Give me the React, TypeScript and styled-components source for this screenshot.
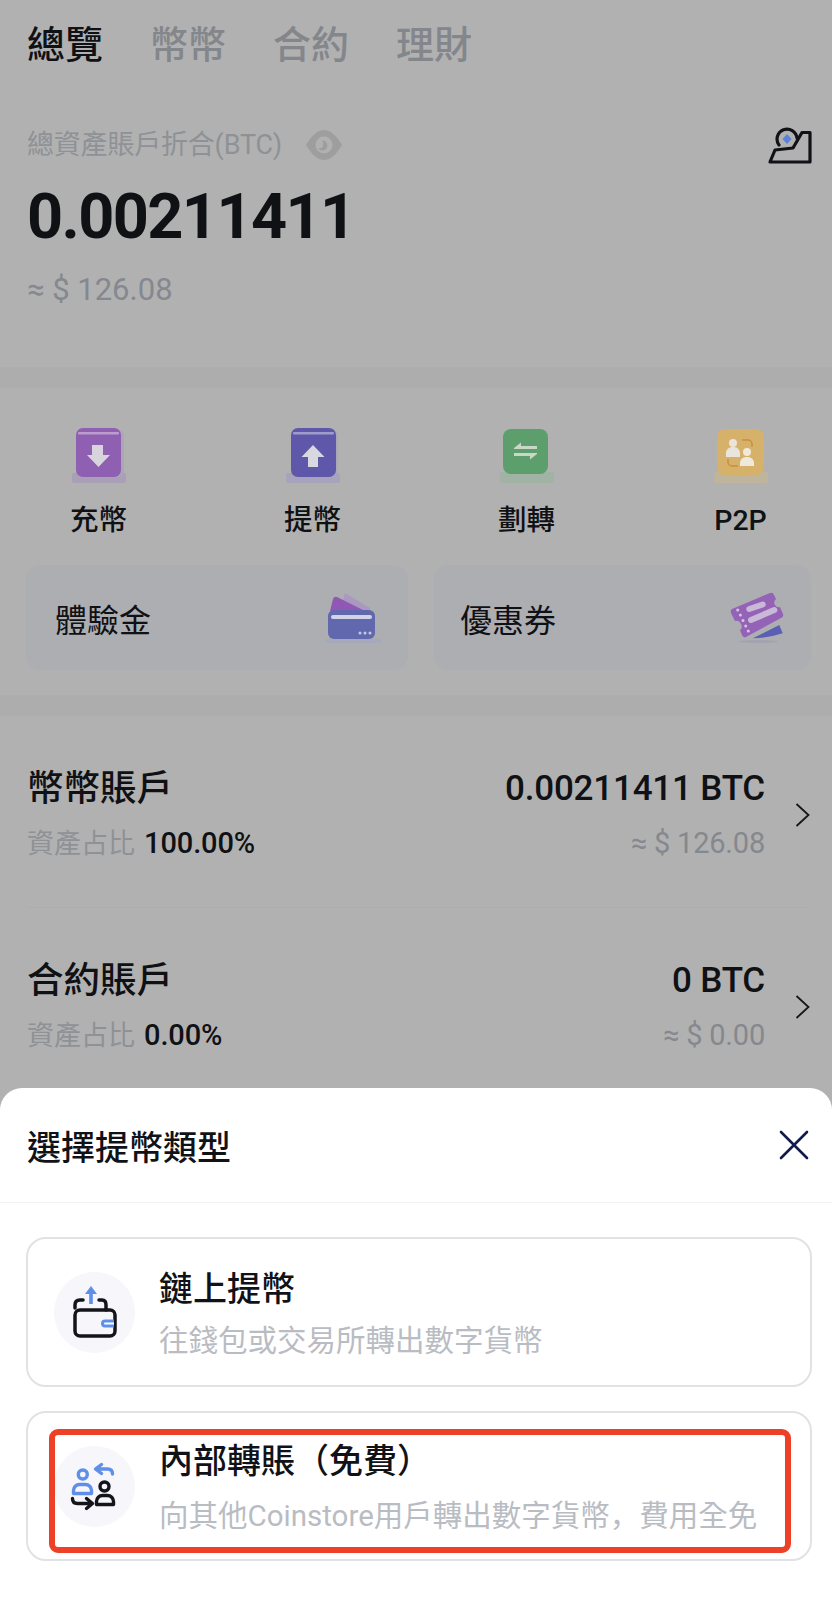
import styled, { createGlobalStyle } from 'styled-components'

const GlobalStyle = createGlobalStyle`
  html, body {
    margin: 0;
    padding: 0;
    background: #b1b1b1;
    font-family: Roboto, "Noto Sans CJK TC", sans-serif;
  }
  * { box-sizing: border-box; }
`

const Page = styled.div`
  position: relative;
  width: 832px;
  height: 1610px;
  overflow: hidden;
  background: #b1b1b1;
  color: #101114;
`

const TopSection = styled.section`
  height: 367px;
  padding: 22px 20px 0 27px;
`

const TabBar = styled.div`
  display: flex;
  gap: 47px;
`

const Tab = styled.div<{ $active?: boolean }>`
  font-size: 38px;
  line-height: 46px;
  font-weight: 500;
  color: ${p => (p.$active ? '#101114' : '#83868b')};
`

const BalanceHead = styled.div`
  display: flex;
  align-items: center;
  gap: 24px;
  height: 44px;
  margin-top: 55px;
`

const BalanceLabel = styled.span`
  font-size: 27px;
  line-height: 30px;
  color: #8e9196;
  letter-spacing: -0.2px;
`

const HeadAction = styled.svg`
  margin-left: auto;
  margin-top: 4px;
`

const BalanceValue = styled.div`
  margin-top: 15px;
  font-size: 63px;
  line-height: 70px;
  font-weight: 700;
  letter-spacing: -1.6px;
`

const BalanceFiat = styled.div`
  margin-top: 20px;
  font-size: 31px;
  line-height: 36px;
  color: #85888e;
`

const Band = styled.div<{ $height: number }>`
  height: ${p => p.$height}px;
  background: #adadad;
`

const ActionSection = styled.section`
  height: 307px;
  padding-top: 40px;
`

const ActionRow = styled.div`
  display: flex;
  justify-content: space-between;
  padding: 0 63px 0 70px;
`

const Action = styled.div`
  display: flex;
  flex-direction: column;
  align-items: center;
  gap: 19px;
  width: 57px;
`

const ActionLabel = styled.span`
  font-size: 28.5px;
  line-height: 36px;
  font-weight: 500;
  white-space: nowrap;
`

const PromoRow = styled.div`
  display: grid;
  grid-template-columns: 382px 377px;
  gap: 26px;
  margin: 26px 0 0 26px;
`

const PromoCard = styled.div<{ $inset: number }>`
  display: flex;
  align-items: center;
  justify-content: space-between;
  height: 105px;
  padding: 0 27px 0 ${p => p.$inset}px;
  border-radius: 14px;
  background: #adaeb1;
`

const PromoLabel = styled.span`
  font-size: 32px;
  line-height: 40px;
  margin-top: 6px;
`

const AccountList = styled.section`
  padding: 0 22px 0 27px;
`

const AccountRow = styled.div`
  display: flex;
  align-items: center;
  padding: 53px 0 46px;
  border-bottom: 1px solid #adadad;
`

const AccountMain = styled.div`
  flex: 1;
`

const AccountLine = styled.div`
  display: flex;
  justify-content: space-between;
`

const SubLine = styled(AccountLine)`
  margin-top: 17px;
`

const AccountName = styled.span`
  font-size: 36.5px;
  line-height: 40px;
  font-weight: 500;
`

const AccountAmount = styled.span`
  font-size: 35px;
  line-height: 40px;
  font-weight: 500;
  letter-spacing: -0.2px;
`

const Share = styled.span`
  font-size: 27px;
  line-height: 34px;
  color: #8e9196;
  b {
    margin-left: 9px;
    font-size: 29px;
    font-weight: 500;
    letter-spacing: -0.1px;
    color: #101114;
  }
`

const AccountFiat = styled.span`
  font-size: 29px;
  line-height: 34px;
  color: #85888e;
  letter-spacing: -0.2px;
`

const Chevron = styled.svg`
  margin-left: 30px;
  flex: none;
`

const Sheet = styled.div`
  position: absolute;
  left: 0;
  right: 0;
  bottom: 0;
  height: 522px;
  border-radius: 22px 22px 0 0;
  background: #fff;
`

const SheetHeader = styled.header`
  display: flex;
  align-items: center;
  justify-content: space-between;
  height: 115px;
  padding: 0 23px 0 27px;
  border-bottom: 1px solid #f1f2f4;
`

const SheetTitle = styled.h2`
  margin: 6px 0 0;
  font-size: 34px;
  line-height: 42px;
  font-weight: 500;
  color: #111217;
`

const SheetBody = styled.div`
  display: flex;
  flex-direction: column;
  gap: 24px;
  padding: 34px 20px 0 26px;
`

const OptionCard = styled.div`
  position: relative;
  display: flex;
  align-items: center;
  gap: 24px;
  height: 150px;
  padding-left: 26px;
  border: 2px solid #e1e2e5;
  border-radius: 20px;
`

const OptionIcon = styled.div`
  flex: none;
  width: 81px;
  height: 81px;
  border-radius: 50%;
  background: #f6f6fb;
  svg { display: block; }
`

const OptionText = styled.div`
  display: flex;
  flex-direction: column;
  gap: 16px;
  padding-top: 5px;
`

const OptionTitle = styled.div`
  font-size: 34px;
  line-height: 36px;
  font-weight: 500;
  color: #111217;
`

const OptionHint = styled.div`
  font-size: 29.5px;
  line-height: 36px;
  color: #b9bcc2;
  white-space: nowrap;
`

const HintComma = styled.span`
  font-family: "Noto Sans CJK SC", sans-serif;
`

const Highlight = styled.div`
  position: absolute;
  left: 21px;
  top: 16px;
  width: 742px;
  height: 124px;
  border: 6px solid #ee4026;
  border-radius: 9px;
`

const ArrowDownIcon = () => (
  <svg width="54" height="56" viewBox="0 0 54 56">
    <rect x="0" y="45" width="54" height="10" rx="2" fill="#a9a0b8" />
    <rect x="6" y="1" width="46" height="48" rx="7" fill="#aaa6b6" />
    <rect x="4" y="0" width="45" height="49" rx="7" fill="#8f5fb2" />
    <rect x="6" y="4" width="41" height="2.5" rx="1" fill="#bb9ccf" />
    <path d="M20 17h11v10h7L26.5 39 15 27h5z" fill="#d8d4de" />
  </svg>
)

const ArrowUpIcon = () => (
  <svg width="54" height="56" viewBox="0 0 54 56">
    <rect x="0" y="45" width="54" height="10" rx="2" fill="#a6a3ba" />
    <rect x="7" y="1" width="45" height="48" rx="7" fill="#a9a8b8" />
    <rect x="5" y="0" width="45" height="49" rx="7" fill="#5f58aa" />
    <rect x="7" y="4" width="41" height="2.5" rx="1" fill="#9f9bca" />
    <path d="M27 17l11.500 12H32v10H22V29h-6.500z" fill="#d8d8e0" />
  </svg>
)

const ExchangeIcon = () => (
  <svg width="54" height="56" viewBox="0 0 54 56">
    <rect x="0" y="44" width="54" height="11" rx="2" fill="#a1b3a5" />
    <rect x="3" y="1" width="45" height="45" rx="8" fill="#5d9f6c" />
    <path d="M14 20l7-5.500V18h16v3H14zM37 26l-7 5.500V28H14v-3h23z" fill="#c9d6c8" />
  </svg>
)

const PeopleIcon = () => (
  <svg width="54" height="56" viewBox="0 0 54 56">
    <rect x="0" y="44" width="54" height="11" rx="2" fill="#bfb59d" />
    <rect x="3" y="1" width="47" height="46" rx="8" fill="#d6b169" />
    <path d="M28 12h6a4 4 0 0 1 4 4v3M14 31v3a4 4 0 0 0 4 4h6" fill="none" stroke="#c98f3f" strokeWidth="1.500" />
    <circle cx="19" cy="15" r="4" fill="#e9e5dc" />
    <path d="M12 29v-4a6 6 0 0 1 6-6h2a6 6 0 0 1 6 6v4z" fill="#e9e5dc" />
    <circle cx="33" cy="24" r="4" fill="#efe9dc" />
    <path d="M26 38v-3a6 6 0 0 1 6-6h2a6 6 0 0 1 6 6v3z" fill="#efe9dc" />
  </svg>
)

const WalletCardIcon = () => (
  <svg width="56" height="51" viewBox="0 0 56 51">
    <rect x="0" y="47" width="56" height="4" rx="1" fill="#a6a8bc" />
    <path d="M20 1l25 15v6H14z" fill="#a999c0" />
    <path d="M8 7q1-3 4-2l28 14H5z" fill="#9157b5" />
    <rect x="3" y="18" width="47" height="29" rx="6" fill="#6268ae" />
    <rect x="6" y="23" width="41" height="4" rx="2" fill="#d2d3e6" />
    <circle cx="35" cy="41" r="1.500" fill="#c7c9e0" />
    <circle cx="40" cy="41" r="1.500" fill="#c7c9e0" />
    <circle cx="45" cy="41" r="1.500" fill="#c7c9e0" />
  </svg>
)

const CouponIcon = () => (
  <svg width="54" height="52" viewBox="0 0 54 52">
    <ellipse cx="28" cy="49.500" rx="20" ry="1.500" fill="#a2a2b0" />
    <path d="M22.700 46.300L49.300 33l3.400 8.300q-14 4.700-30 5z" fill="#5b5eb5" />
    <path d="M2 17L40 1q3-1 4 2l2 4q-3 3-1 6t5 2l3 7q1 3-2 4L16 45q-3 1-4-2l-2-5q3-2 1-6t-6-3l-4-8q-1-3 1-4z" fill="#9463b8" />
    <path d="M19.300 17L32.700 12.500M21 28L44.300 18" stroke="#c9b8d6" strokeWidth="6" strokeLinecap="round" />
    <g fill="#d4c6de">
      <circle cx="7.700" cy="18" r="1.500" />
      <circle cx="10.400" cy="23" r="1.500" />
      <circle cx="13" cy="28.500" r="1.500" />
      <circle cx="15.700" cy="34" r="1.500" />
      <circle cx="18.300" cy="39" r="1.500" />
    </g>
  </svg>
)

const EyeIcon = () => (
  <svg width="36" height="30" viewBox="0 0 36 30">
    <path d="M0 15C6 5 12 0 18 0s12 5 18 15c-6 10-12 15-18 15S6 25 0 15z" fill="#9e9e9e" />
    <circle cx="18" cy="15" r="8.500" fill="#b1b1b1" />
    <path d="M16 10.500a5 5 0 1 1-4 7.500q4 1 5-2t-1-5.500z" fill="#9e9e9e" />
  </svg>
)

const ChainWalletIcon = () => (
  <svg width="81" height="81" viewBox="-6 -8 81 81">
    <path d="M15 28v-3q0-5 5-5h3M39 20h3q4 0 4 5v5" fill="none" stroke="#14151a" strokeWidth="3.500" strokeLinecap="round" />
    <rect x="15" y="30" width="40" height="26" rx="5" fill="none" stroke="#14151a" strokeWidth="3.500" />
    <path d="M54 41h-9a2.500 2.500 0 0 0 0 5h9" fill="#fff" stroke="#5f8fe8" strokeWidth="3" />
    <path d="M31 24V12" stroke="#5f8fe8" strokeWidth="3.600" />
    <path d="M31 6l6 8H25z" fill="#5f8fe8" />
  </svg>
)

const TransferIcon = () => (
  <svg width="81" height="81" viewBox="-5.500 -4.500 81 81" fill="none" strokeLinecap="round" strokeLinejoin="round">
    <circle cx="23.300" cy="24" r="4.500" stroke="#5f8fe8" strokeWidth="3.400" />
    <path d="M14 43v-3a6 6 0 0 1 6-6h6a6 6 0 0 1 6 6v3z" stroke="#5f8fe8" strokeWidth="3.400" />
    <path d="M42 14l-6 4.500 6 4.500M37 18.500h11q5 0 5 5" stroke="#5f8fe8" strokeWidth="3.400" />
    <circle cx="45" cy="36" r="4.500" stroke="#14151a" strokeWidth="3.400" />
    <path d="M37 54v-3a6 6 0 0 1 6-6h5a6 6 0 0 1 6 6v3z" stroke="#14151a" strokeWidth="3.400" />
    <path d="M13 48q0 5 5 5h14M27 48l6 5-6 5" stroke="#14151a" strokeWidth="3.400" />
  </svg>
)

const accounts = [
  { name: '幣幣賬戶', share: '100.00%', amount: '0.00211411 BTC', fiat: '≈ $ 126.08' },
  { name: '合約賬戶', share: '0.00%', amount: '0 BTC', fiat: '≈ $ 0.00' },
]

export default function App() {
  return (
    <Page>
      <GlobalStyle />
      <TopSection>
        <TabBar>
          <Tab $active>總覽</Tab>
          <Tab>幣幣</Tab>
          <Tab>合約</Tab>
          <Tab>理財</Tab>
        </TabBar>
        <BalanceHead>
          <BalanceLabel>總資產賬戶折合(BTC)</BalanceLabel>
          <EyeIcon />
          <HeadAction width="44" height="40" viewBox="8 8 44 40" fill="none">
            <path d="M33 29l9-15.500h8V43H10l5-12 18-2z" stroke="#111216" strokeWidth="3.200" strokeLinejoin="round" />
            <path d="M19 26A10 10 0 1 1 37 19" stroke="#111216" strokeWidth="3.200" strokeLinecap="round" />
            <path d="M27 15l4.500 5-4.500 5-4.500-5z" fill="#5b82d6" />
          </HeadAction>
        </BalanceHead>
        <BalanceValue>0.00211411</BalanceValue>
        <BalanceFiat>≈ $ 126.08</BalanceFiat>
      </TopSection>
      <Band $height={21} />
      <ActionSection>
        <ActionRow>
          <Action><ArrowDownIcon /><ActionLabel>充幣</ActionLabel></Action>
          <Action><ArrowUpIcon /><ActionLabel>提幣</ActionLabel></Action>
          <Action><ExchangeIcon /><ActionLabel>劃轉</ActionLabel></Action>
          <Action><PeopleIcon /><ActionLabel>P2P</ActionLabel></Action>
        </ActionRow>
        <PromoRow>
          <PromoCard $inset={29}><PromoLabel>體驗金</PromoLabel><WalletCardIcon /></PromoCard>
          <PromoCard $inset={26}><PromoLabel>優惠券</PromoLabel><CouponIcon /></PromoCard>
        </PromoRow>
      </ActionSection>
      <Band $height={21} />
      <AccountList>
        {accounts.map(a => (
          <AccountRow key={a.name}>
            <AccountMain>
              <AccountLine>
                <AccountName>{a.name}</AccountName>
                <AccountAmount>{a.amount}</AccountAmount>
              </AccountLine>
              <SubLine>
                <Share>資產占比<b>{a.share}</b></Share>
                <AccountFiat>{a.fiat}</AccountFiat>
              </SubLine>
            </AccountMain>
            <Chevron width="15" height="24" viewBox="0 0 15 24" fill="none">
              <path d="M1.500 1l12 11-12 11" stroke="#15161a" strokeWidth="1.800" />
            </Chevron>
          </AccountRow>
        ))}
      </AccountList>
      <Sheet>
        <SheetHeader>
          <SheetTitle>選擇提幣類型</SheetTitle>
          <svg width="30" height="30" viewBox="0 0 30 30" fill="none">
            <path d="M2 2l26 26M28 2L2 28" stroke="#111a4c" strokeWidth="2.600" strokeLinecap="round" />
          </svg>
        </SheetHeader>
        <SheetBody>
          <OptionCard>
            <OptionIcon><ChainWalletIcon /></OptionIcon>
            <OptionText>
              <OptionTitle>鏈上提幣</OptionTitle>
              <OptionHint>往錢包或交易所轉出數字貨幣</OptionHint>
            </OptionText>
          </OptionCard>
          <OptionCard>
            <OptionIcon><TransferIcon /></OptionIcon>
            <OptionText>
              <OptionTitle>內部轉賬（免費）</OptionTitle>
              <OptionHint>向其他Coinstore用戶轉出數字貨幣<HintComma>，</HintComma>費用全免</OptionHint>
            </OptionText>
            <Highlight />
          </OptionCard>
        </SheetBody>
      </Sheet>
    </Page>
  )
}
